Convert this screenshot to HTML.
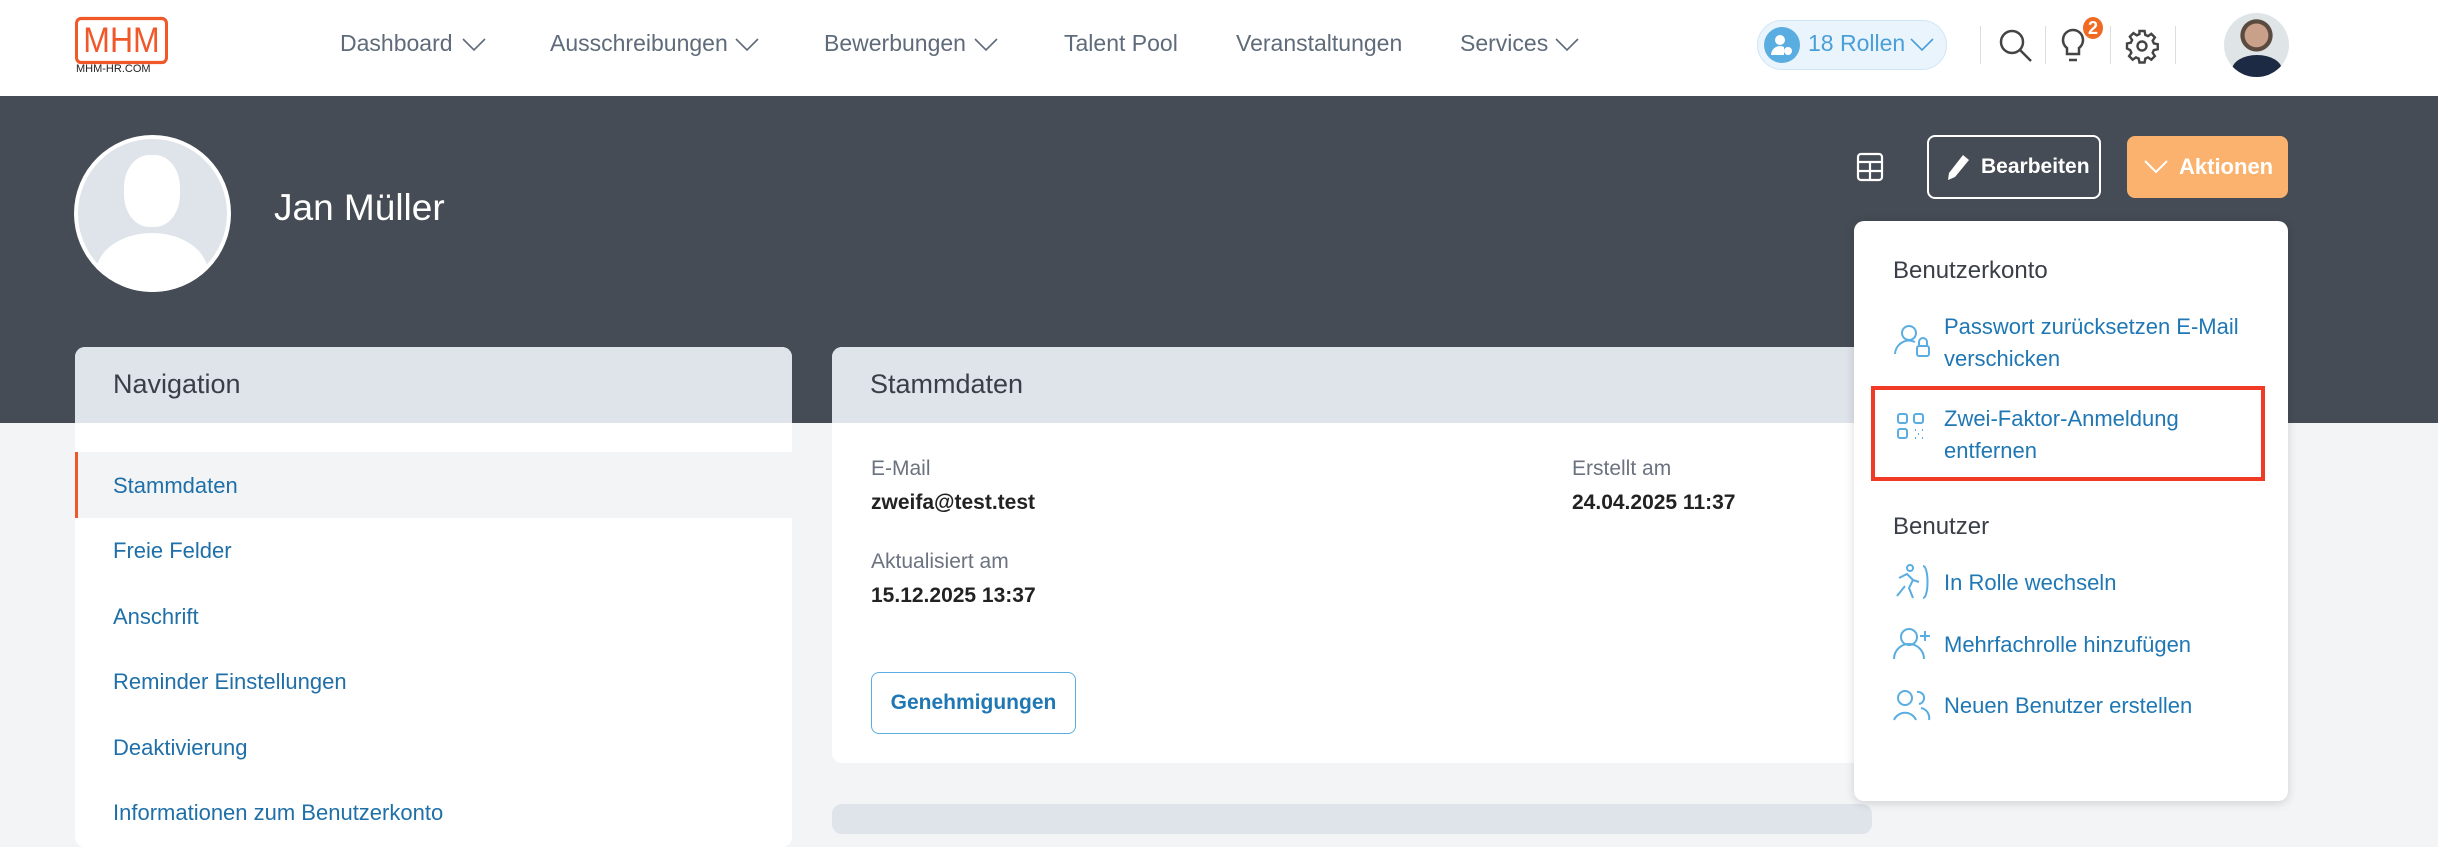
<!DOCTYPE html>
<html><head><meta charset="utf-8"><style>
*{box-sizing:border-box;margin:0;padding:0}
body{width:2438px;height:822px;overflow:hidden;background:#f3f4f6;font-family:"Liberation Sans",sans-serif;position:relative}
.a{position:absolute}
.hdr{left:0;top:0;width:2438px;height:96px;background:#fff}
.nav{top:30px;font-size:23px;color:#5f6b7a}
.band{left:0;top:96px;width:2438px;height:327px;background:#464c55}
.card{background:#fff;border-radius:10px;overflow:hidden}
.ch{height:76px;background:#dfe3ea;font-size:27px;color:#3a3f47;padding:22px 38px}
.ni{font-size:22px;color:#1f6fa8;position:absolute;left:38px}
.lbl{font-size:21px;color:#6b7280}
.val{font-size:21px;color:#222;font-weight:bold}
.dd{color:#1f77b4;font-size:22px;line-height:32px}
svg{position:absolute}
</style></head><body>
<div class="a hdr"></div>
<div class="a" style="left:75px;top:19px;width:93px;height:43px;border:3px solid #f0582a;border-radius:6px;color:#f0582a;font-size:32px;text-align:center;line-height:37px;transform:scaleY(1.1)">MHM</div>
<div class="a" style="left:76px;top:63px;font-size:11px;color:#222">MHM-HR.COM</div>
<div class="a nav" style="left:340px">Dashboard</div>
<div class="a nav" style="left:550px">Ausschreibungen</div>
<div class="a nav" style="left:824px">Bewerbungen</div>
<div class="a nav" style="left:1064px">Talent Pool</div>
<div class="a nav" style="left:1236px">Veranstaltungen</div>
<div class="a nav" style="left:1460px">Services</div>
<svg style="left:462px;top:38px" width="24" height="14" viewBox="0 0 24 14" fill="none" stroke="#5f6b7a" stroke-width="1.6"><path d="M1 1l11 11L23 1"/></svg>
<svg style="left:735px;top:38px" width="24" height="14" viewBox="0 0 24 14" fill="none" stroke="#5f6b7a" stroke-width="1.6"><path d="M1 1l11 11L23 1"/></svg>
<svg style="left:974px;top:38px" width="24" height="14" viewBox="0 0 24 14" fill="none" stroke="#5f6b7a" stroke-width="1.6"><path d="M1 1l11 11L23 1"/></svg>
<svg style="left:1555px;top:38px" width="24" height="14" viewBox="0 0 24 14" fill="none" stroke="#5f6b7a" stroke-width="1.6"><path d="M1 1l11 11L23 1"/></svg>
<div class="a" style="left:1757px;top:20px;width:190px;height:50px;border-radius:25px;background:#eaf4fc;border:1px solid #cfe5f6"></div>
<div class="a" style="left:1764px;top:27px;width:36px;height:36px;border-radius:50%;background:#5aade0"></div>
<svg style="left:1770px;top:33px" width="24" height="24" viewBox="0 0 24 24" fill="#fff"><circle cx="10" cy="7" r="5"/><path d="M1 22a9 9 0 0 1 13-8v8z"/><circle cx="18" cy="18" r="4"/></svg>
<div class="a" style="left:1808px;top:30px;font-size:23px;color:#4a9fd8">18 Rollen</div>
<svg style="left:1910px;top:38px" width="24" height="14" viewBox="0 0 24 14" fill="none" stroke="#4a9fd8" stroke-width="1.6"><path d="M1 1l11 11L23 1"/></svg>
<div class="a" style="left:1980px;top:26px;width:1px;height:38px;background:#ddd"></div>
<div class="a" style="left:2045px;top:26px;width:1px;height:38px;background:#ddd"></div>
<div class="a" style="left:2110px;top:26px;width:1px;height:38px;background:#ddd"></div>
<div class="a" style="left:2175px;top:26px;width:1px;height:38px;background:#ddd"></div>
<svg style="left:1998px;top:28px" width="36" height="36" viewBox="0 0 36 36" fill="none" stroke="#444" stroke-width="2.5"><circle cx="14" cy="14" r="11"/><path d="M22 22l11 11"/></svg>
<svg style="left:2060px;top:28px" width="26" height="36" viewBox="0 0 26 36" fill="none" stroke="#444" stroke-width="2.5"><path d="M13 2a10 10 0 0 0-6 18v6h12v-6a10 10 0 0 0-6-18zM9 32h8"/></svg>
<div class="a" style="left:2083px;top:17px;width:20px;height:22px;border-radius:50%;background:#f06a24;color:#fff;font-size:18px;text-align:center;line-height:22px;font-weight:bold">2</div>
<svg style="left:2124px;top:28px" width="36" height="36" viewBox="0 0 24 24" fill="none" stroke="#444" stroke-width="1.6"><circle cx="12" cy="12" r="3"/><path d="M10.3 2h3.4l.5 2.6 1.8.8 2.2-1.5 2.4 2.4-1.5 2.2.8 1.8 2.6.5v3.4l-2.6.5-.8 1.8 1.5 2.2-2.4 2.4-2.2-1.5-1.8.8-.5 2.6h-3.4l-.5-2.6-1.8-.8-2.2 1.5-2.4-2.4 1.5-2.2-.8-1.8L2 13.7v-3.4l2.6-.5.8-1.8-1.5-2.2 2.4-2.4 2.2 1.5 1.8-.8z"/></svg>
<div class="a" style="left:2224px;top:13px;width:65px;height:64px;border-radius:50%;background:radial-gradient(circle at 50% 35%,#c9a08a 0 22%,#5a4a3f 23% 30%,#dfe4e6 31%);overflow:hidden"><div style="position:absolute;left:8px;top:42px;width:50px;height:30px;border-radius:50% 50% 0 0;background:#1c2a44"></div></div>
<div class="a band"></div>
<div class="a" style="left:74px;top:135px;width:157px;height:157px;border-radius:50%;background:#fff;overflow:hidden"><div style="position:absolute;left:4px;top:4px;width:149px;height:149px;border-radius:50%;background:#dfe3ea"></div><div style="position:absolute;left:50px;top:20px;width:56px;height:72px;border-radius:45%;background:#fff"></div><div style="position:absolute;left:22px;top:98px;width:112px;height:80px;border-radius:50% 50% 0 0;background:#fff"></div></div>
<div class="a" style="left:274px;top:187px;font-size:37px;color:#fff">Jan Müller</div>
<svg style="left:1856px;top:152px" width="28" height="30" viewBox="0 0 28 30" fill="none" stroke="#fff" stroke-width="2.2"><rect x="2" y="2" width="24" height="26" rx="3"/><path d="M2 10h24M2 19h24M14 10v18"/></svg>
<div class="a" style="left:1927px;top:135px;width:174px;height:64px;border:2px solid #fff;border-radius:8px;color:#fff;font-size:21px;font-weight:bold;line-height:60px;padding-left:52px">Bearbeiten</div>
<svg style="left:1945px;top:153px" width="26" height="28" viewBox="0 0 26 28"><path d="M18 2l6 5-14 17-7 3 1-7z" fill="#fff"/></svg>
<div class="a" style="left:2127px;top:136px;width:161px;height:62px;border-radius:8px;background:#fbb26e;color:#fff;font-size:22px;font-weight:bold;line-height:62px;padding-left:52px">Aktionen</div>
<svg style="left:2144px;top:160px" width="24" height="14" viewBox="0 0 24 14" fill="none" stroke="#fff" stroke-width="2"><path d="M1 1l11 11L23 1"/></svg>
<div class="a card" style="left:75px;top:347px;width:717px;height:500px">
<div class="ch">Navigation</div>
<div class="a" style="left:0;top:105px;width:717px;height:66px;background:#f3f4f6;border-left:3px solid #f0582a"></div>
<div class="ni" style="top:126px">Stammdaten</div>
<div class="ni" style="top:191px">Freie Felder</div>
<div class="ni" style="top:257px">Anschrift</div>
<div class="ni" style="top:322px">Reminder Einstellungen</div>
<div class="ni" style="top:388px">Deaktivierung</div>
<div class="ni" style="top:453px">Informationen zum Benutzerkonto</div>
</div>
<div class="a card" style="left:832px;top:347px;width:1100px;height:416px">
<div class="ch">Stammdaten</div>
<div class="a lbl" style="left:39px;top:110px">E-Mail</div>
<div class="a val" style="left:39px;top:144px">zweifa@test.test</div>
<div class="a lbl" style="left:39px;top:203px">Aktualisiert am</div>
<div class="a val" style="left:39px;top:237px">15.12.2025 13:37</div>
<div class="a lbl" style="left:740px;top:110px">Erstellt am</div>
<div class="a val" style="left:740px;top:144px">24.04.2025 11:37</div>
<div class="a" style="left:39px;top:325px;width:205px;height:62px;border:1.5px solid #5aade0;border-radius:8px;color:#1f77b4;font-size:21px;font-weight:bold;line-height:60px;text-align:center">Genehmigungen</div>
</div>
<div class="a" style="left:832px;top:804px;width:1040px;height:30px;border-radius:10px;background:#dfe3ea"></div>
<div class="a" style="left:1854px;top:221px;width:434px;height:580px;background:#fff;border-radius:10px;box-shadow:0 2px 10px rgba(0,0,0,.15)"></div>
<div class="a" style="left:1893px;top:257px;font-size:24px;color:#3a3f47">Benutzerkonto</div>
<div class="a dd" style="left:1944px;top:311px">Passwort zurücksetzen E-Mail<br>verschicken</div>
<div class="a" style="left:1871px;top:386px;width:394px;height:95px;border:4px solid #f03a26"></div>
<div class="a dd" style="left:1944px;top:403px">Zwei-Faktor-Anmeldung<br>entfernen</div>
<div class="a" style="left:1893px;top:513px;font-size:24px;color:#3a3f47">Benutzer</div>
<div class="a dd" style="left:1944px;top:567px">In Rolle wechseln</div>
<div class="a dd" style="left:1944px;top:629px">Mehrfachrolle hinzufügen</div>
<div class="a dd" style="left:1944px;top:690px">Neuen Benutzer erstellen</div>
<svg style="left:1893px;top:322px" width="38" height="38" viewBox="0 0 38 38" fill="none" stroke="#5aade0" stroke-width="2"><circle cx="16" cy="11" r="7"/><path d="M2 32a14 14 0 0 1 20-12"/><rect x="24" y="24" width="12" height="10" rx="2"/><path d="M26 24v-4a4 4 0 0 1 8 0v4"/></svg>
<svg style="left:1896px;top:412px" width="32" height="28" viewBox="0 0 32 28" fill="none" stroke="#5aade0" stroke-width="2"><rect x="2" y="2" width="9" height="9" rx="2"/><rect x="18" y="2" width="9" height="9" rx="2"/><rect x="2" y="17" width="9" height="9" rx="2"/><path d="M19 18h1M26 18h1M22 22h1M19 26h1M26 26h1"/></svg>
<svg style="left:1893px;top:564px" width="38" height="36" viewBox="0 0 38 36" fill="none" stroke="#5aade0" stroke-width="2"><circle cx="17" cy="4" r="3"/><path d="M6 14l8-4 6 6-4 8 4 10M12 22l-8 10M20 16l6 2M30 2c6 0 6 32 0 32"/></svg>
<svg style="left:1893px;top:627px" width="38" height="34" viewBox="0 0 38 34" fill="none" stroke="#5aade0" stroke-width="2"><circle cx="16" cy="10" r="8"/><path d="M1 32a15 15 0 0 1 30 0M32 4v10M27 9h10"/></svg>
<svg style="left:1893px;top:688px" width="38" height="34" viewBox="0 0 38 34" fill="none" stroke="#5aade0" stroke-width="2"><circle cx="12" cy="10" r="7"/><path d="M1 32a12 12 0 0 1 22 0M24 4a6 6 0 0 1 2 12M28 20a10 10 0 0 1 8 12"/></svg>
</body></html>
